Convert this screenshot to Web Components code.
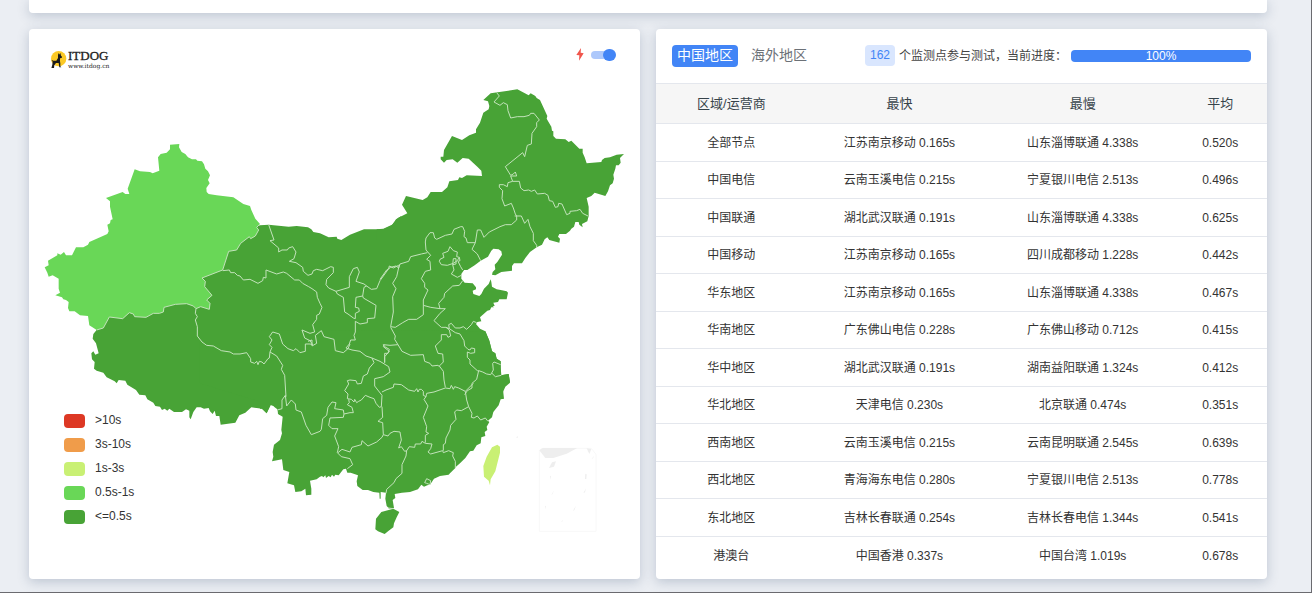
<!DOCTYPE html>
<html lang="zh-CN">
<head>
<meta charset="utf-8">
<title>ITDOG</title>
<style>
html, body { margin: 0; }
body { font-family: "Liberation Sans", "Noto Sans CJK SC", sans-serif; font-size: 12px; color: #444; background: #ebeef3; }
</style>
</head>
<body>
<speed-page>
  <ui-card slot="above"></ui-card>
  <ui-card><china-map></china-map></ui-card>
  <ui-card><result-panel></result-panel></ui-card>
</speed-page>

<template id="page-t">
<style>
:host { display: flex; flex-direction: column; gap: 16px; box-sizing: border-box; min-height: 100vh; padding: 0 44px 13px 29px; border-right: 1px solid #6b6b70; border-bottom: 1px solid #6b6b70; }
header { display: grid; height: 13px; }
main { display: grid; grid-template-columns: 1fr 1fr; gap: 16px; }
</style>
<header><slot name="above"></slot></header>
<main><slot></slot></main>
</template>

<template id="card-t">
<style>
:host { display: block; background: #fff; border-radius: 4px; box-shadow: 0 3px 12px rgba(50, 75, 110, .25); overflow: hidden; }
:host([slot="above"]) { border-radius: 0 0 4px 4px; }
</style>
<slot></slot>
</template>

<template id="logo-t">
<style>
:host { display: flex; align-items: center; gap: 1px; color: #222; }
.name { display: flex; flex-direction: column; font-family: "Liberation Serif", serif; }
b { font-size: 13px; line-height: 14px; font-weight: 400; -webkit-text-stroke: .3px #222; }
small { font-family: "DejaVu Serif", serif; font-size: 6px; line-height: 6px; }
</style>
<svg width="18" height="18" viewBox="0 0 54 54" aria-hidden="true"><circle cx="29" cy="26" r="23" fill="#fbc926"/><path fill="#1b1b1b" d="M27 8l3 6 4-5 2 8 3 3-1 4-5 1 0 9 1 6 0 9 3 3h-6l-2-13-8 0-5 7-1 7 3 2H7l3-11 1-9-4-6 6 3h9l5-8z"/></svg>
<span class="name"><b>ITDOG</b><small>www.itdog.cn</small></span>
</template>

<template id="switch-t">
<style>
:host { display: block; }
label { display: flex; align-items: center; gap: 7px; }
input { appearance: none; margin: 0; width: 25px; height: 12px; display: flex; align-items: center; position: relative; cursor: pointer; }
input::before { content: ""; width: 22px; height: 8px; border-radius: 4px; background: #adc8fb; }
input::after { content: ""; position: absolute; right: 0; top: 0; width: 13px; height: 12px; border-radius: 6px; background: #4285f6; }
input:not(:checked)::after { right: 12px; }
</style>
<label><svg width="8" height="14" viewBox="0 0 24 42" aria-hidden="true"><path fill="#f0564c" d="M15 0L1 21l9 1-1 16L23 16l-9-2z"/></svg><input type="checkbox" role="switch" aria-label="快速" checked></label>
</template>

<template id="legend-t">
<style>
:host { display: block; }
ul { margin: 0; padding: 0; list-style: none; display: grid; gap: 10px; color: #333; }
li { display: flex; align-items: flex-start; gap: 10px; height: 14px; line-height: 12px; }
i { width: 21px; height: 14px; border-radius: 4px; }
</style>
<ul>
<li><i style="background:#dd3824"></i>&gt;10s</li>
<li><i style="background:#f09c4a"></i>3s-10s</li>
<li><i style="background:#c9f074"></i>1s-3s</li>
<li><i style="background:#69d757"></i>0.5s-1s</li>
<li><i style="background:#48a336"></i>&lt;=0.5s</li>
</ul>
</template>

<template id="map-t">
<style>
:host { display: block; position: relative; }
.map { display: block; width: 100%; height: auto; }
brand-logo { position: absolute; left: 20px; top: 20px; }
mode-switch { position: absolute; right: 24px; top: 19px; }
map-legend { position: absolute; left: 35px; bottom: 55px; }
.land { fill: #48a336; }
.line { fill: none; stroke: #c3e3bb; stroke-width: 3; stroke-linejoin: round; }
</style>
<svg class="map" viewBox="29 29 611 550" role="img" aria-label="中国地图">
<g class="land">
<path transform="translate(80 300) scale(.333333)" d="M50 88L48 92 40 102 38 116 48 130 56 160 46 164 40 154 34 160 36 178 44 186 42 206 50 212 70 218 80 232 104 244 110 250 116 240 136 242 142 254 168 270 178 284 196 286 202 298 220 308 226 318 240 320 246 330 254 326 262 332 268 326 282 336 306 336 318 328 328 332 328 352 332 358 340 336 350 322 362 322 372 326 386 324 390 334 398 342 404 332 408 348 418 348 422 374 466 368 478 346 496 338 514 322 530 324 546 326 560 340 570 316 574 312 584 322 592 328 598 344 660 344V-20H388L220 20 88 40z"/>
<path transform="translate(180 210) scale(.333333)" d="M230 50L240 46 266 44 326 50 350 48 384 52 394 58 400 66 420 70 446 82 470 80 472 86 484 90 510 74 552 58 610 58 636 46 648 28 664 18V600H320L60 520V170L100 60 200 40z"/>
<path transform="translate(380 80) scale(.333333)" d="M-10 448L10 446 36 434 54 414 82 400 66 374 78 348 128 360 142 352 152 336 186 336 202 322 208 304 234 300 238 292 246 294 260 286 306 288 304 272 292 260 266 236 248 234 232 248 218 238 200 240 192 248 182 238 182 230 190 230 192 210 216 168 246 180 268 166 288 158 288 148 300 128 310 98 326 88 328 78 324 64 310 60 332 40 412 28 446 46 452 40 466 48 470 54 480 60 490 82 502 108 500 116 514 140 516 152 520 154 520 168 528 176 556 178 566 186 574 182 598 206 608 206 608 218 614 232 620 250 664 246 666 240 674 234 690 232 710 224 732 222 720 234 722 248 716 256 708 256 706 266 700 284 702 296 698 310 690 316 684 334 676 348 644 338 634 348 620 354 626 380 626 408 622 424 606 432 608 442 598 434 596 426 586 426 582 440 574 446 570 452 558 462 538 462 534 470 540 476 538 488 508 480 502 472 494 478 486 494 470 502 450 516 436 534 426 550 402 550 396 558 396 572 364 576 346 586 336 584 338 576 346 568 344 554 352 546 366 524 364 514 356 508 340 506 334 512 324 530 302 542 284 556 262 570 252 570 200 600H-10z"/>
<path transform="translate(380 220) scale(.333333)" d="M-60 60H230L262 150 252 150 244 162 244 176 254 188 278 190 288 202 288 208 278 212 280 222 298 228 304 222 312 206 326 192 332 178 334 186 336 200 350 208 362 210 380 214 384 218 380 238 358 238 354 246 340 248 344 258 338 258 342 262 334 262 330 270 322 272 300 292 304 304 292 306 288 312 300 326 316 334 328 362 336 394 346 400 350 416 362 424 362 442 364 466 386 462 390 488 376 500 370 514 370 536H-60z"/>
<path transform="translate(260 330) scale(.333333)" d="M0 0L676 4 688 32 696 64 706 70 710 86 722 94 722 136 746 132 750 156 738 162 728 182 732 206 722 208 716 226 700 246 696 262 684 272 688 276 680 290 682 300 674 306 676 318 664 322 662 340 650 346 640 362 630 364 616 384 600 400 588 410 586 414 570 430 566 434 540 438 522 446 510 464 502 466 492 470 484 464 474 478 450 486 426 488 404 492 406 504 398 510 402 534 388 536 380 528 376 506 378 488 362 486 362 506 359 506 358 488 340 486 324 480 308 480 292 468 290 454 294 436 272 428 262 428 258 416 250 418 236 436 226 434 222 440 216 434 212 442 206 438 198 444 196 436 190 442 186 438 180 440 170 448 150 452 154 476 154 494 138 496 136 476 124 484 106 486 102 466 82 460 88 426 70 420 66 388 36 394 40 380 38 366 42 344 60 330 66 310 64 300 68 260 54 252 52 232 34 222 20 250 6 236 0 236zM386 540L400 536 418 546 410 562 402 580 400 592 386 602 374 612 354 604 346 598 348 566 364 546z"/>
</g>
<path transform="translate(30 130) scale(.333333)" fill="#69d757" d="M420 44L448 42 447 52 455 66 466 72 474 82 486 88 498 88 502 92 516 94 522 103 526 116 534 124 540 136 534 150 539 160 529 174 530 186 536 192 560 196 610 202 640 222 660 228 664 240 676 266 690 282 680 292 686 300 676 318 662 326 658 320 632 340 620 360 596 364 578 420 516 444 526 454 524 470 546 496 530 510 540 520 538 538 512 530 498 536 490 528 470 521 436 523 402 532 400 546 388 550 370 550 348 562 314 560 310 552 298 548 278 566 238 561 220 594 200 600 178 586 174 558 150 556 134 544 118 544 114 534 116 516 108 510 100 508 96 502 76 496 90 488 86 476 86 446 68 436 56 440 52 428 44 412 56 406 54 392 82 376 82 370 92 374 102 366 108 376 126 376 138 352 160 352 174 344 178 336 232 312 236 304 232 284 240 280 242 270 248 268 240 230 240 214 228 204 278 186 286 192 298 192 293 176 314 118 330 124 360 126 368 130 388 122 384 82 392 72 410 68 420 58z"/>
<g class="line">
<path transform="translate(30 130) scale(.333333)" d="M690 282L680 292 686 300 676 318 662 326 658 320 632 340 620 360 596 364 578 420 516 444 526 454 524 470 546 496 530 510 540 520 538 538 512 530 498 536 490 528 470 521 436 523 402 532 400 546 388 550 370 550 348 562 314 560 310 552 298 548 278 566 238 561 220 594 200 600"/>
<path transform="translate(180 210) scale(.333333)" d="M266 44L282 90 270 92 296 114 296 126 306 120 322 120 326 114 338 110 348 126 342 146 328 154 348 158 368 172 370 184 384 196 396 192 400 182 410 178 428 182 452 170 460 172 460 188 440 208 438 224 446 234 468 244 508 232 508 200 520 176 532 172 538 186 528 214 552 222 560 228M468 244L472 252 490 262 494 306 504 312 520 324 526 326 526 310 538 304 536 294 526 292 528 262 548 258 552 232 560 228 574 238 590 236 600 212 626 176 628 168 640 174 656 166M548 258L550 264 588 286 584 324 562 326 562 338 540 342 526 334 526 366 522 376 526 390 512 390 508 402 498 414 516 420 540 424 558 438 576 444M128 182L148 180 152 188 164 188 172 196 180 198 190 210 210 208 234 220 248 212 250 202 258 204 258 180 290 192 310 186 320 190 344 210 358 210 368 220 386 230 396 236 410 246 412 262 420 280 426 292 418 312 410 316 410 328 398 344 404 366 390 370 366 360 374 384 390 392 398 404 390 402 376 402 376 424 360 428 348 416 340 422 324 416 308 402 298 372 278 366 268 380 276 390 268 404 276 412 270 426M384 394L396 390 396 408 410 400 406 376 424 362 432 380 462 388 466 422 490 428 504 416 510 402M48 296L46 310 52 320 46 330 52 350 52 378 66 396 80 406 100 408 124 422 150 426 160 432 180 432 200 428 212 446 212 456 224 460 230 454 234 464 238 454 246 456 252 462 264 446 268 444 270 426 290 438 308 466 304 478 314 496 318 560"/>
<path transform="translate(380 80) scale(.333333)" d="M350 38L358 48 342 66 360 76 370 68 382 74 384 92 392 114 412 110 432 110 448 106 452 100 462 100 478 120 470 128 470 140 456 160 454 192 442 196 434 230 428 218 376 260 392 286 400 282 406 276 410 288 392 288 398 304 384 308 382 320 370 314 358 314 358 322 368 332 366 356 374 378 394 370 400 384 406 402 410 408M398 304L418 304 422 324 432 332 446 330 454 334 464 330 472 342 494 340 504 346 508 362 518 364 526 382 534 380 536 370 546 372 560 404 570 400 570 394 590 392 600 388 608 400 624 408M404 408L424 408 434 430 444 418 450 440 460 460 460 482 470 496 470 504M410 408L410 420 394 434 376 434 360 440 328 456 312 472 302 450 292 450 286 488 276 508 292 522 302 542M286 488L262 488 258 474 252 470 254 454 248 440 242 440 222 448 216 462 196 466 170 478 164 474 160 458 150 458 138 474 136 486 138 510 152 526"/>
<path transform="translate(380 220) scale(.333333)" d="M152 106L140 118 150 124 152 150 136 154 124 176 134 190 134 202 144 210 130 240 130 256 152 262 180 266M142 98L124 102 92 110 86 124 60 132 56 144 48 138 32 142 20 150 0 178M58 134L50 170 38 190 48 206 38 230 40 276 32 320 46 322 68 308 86 298 110 298 130 284 130 256M32 322L46 348 44 358 54 374 30 376 10 374 14 380 28 388 24 400 14 400 14 428M54 374L66 394 92 406 130 404 134 424 150 430 156 438 174 436 178 440M248 182L238 196 218 198 194 220 192 232 176 250 180 266 196 266 180 280 162 302 184 322 198 322 208 326 206 314 214 310 226 324 240 324 250 320 260 328 274 314 280 304 290 308M180 118L192 112 188 100 204 94 210 80 220 92 232 96 230 110 238 112 232 122 220 130 202 136 184 134 178 124zM218 134L220 116 228 116 228 132 218 134 222 150 214 162 232 172 244 166M238 112L240 122 234 124 242 140 248 150M198 322L208 330 212 348 204 352 200 344 184 344 184 360 166 378 174 400 188 402 190 426 178 438 190 454 192 480 196 502M208 326L226 338 240 342 252 362 254 378 264 388 270 390 274 384 284 386 284 398 272 400 262 396 262 412 270 420 270 432 292 452 296 452 308 456 320 462 332 464 340 450 338 430 342 426 362 434M336 460L346 470 364 466M296 452L290 478 276 490 276 504 262 512 254 524"/>
<path transform="translate(260 330) scale(.333333)" d="M336 84L342 98 328 114 322 132 310 138 304 160 292 162 288 152 270 150 262 152 266 162 254 182 264 192 262 206 274 208 282 216 284 208 290 218 296 214 304 210 316 196 330 202 342 206 348 220 358 232 364 230 366 196 344 168 344 146 370 140 390 126 386 110 360 94 336 84M374 98L374 80 388 64 370 50 372 44M366 186L378 180 400 172 402 162 424 164 446 180 464 184 470 176 474 186 478 178 484 178 490 184 490 196 498 200 500 190 522 186 556 174 570 176 574 166 580 178 584 170 596 174 616 184 620 210 626 230 604 242 590 240 584 246 588 268 572 286 570 300 558 324 556 340 550 344 550 362M498 200L492 208 504 228 490 262 500 290 498 306 506 310 496 316 496 338M616 184L640 160M626 230L636 250 634 262 642 264 652 258 662 270 676 264 684 274M366 230L368 262 354 274 368 278 370 314M234 368L246 358 270 366 276 352 304 344 306 332 324 348 350 336 366 322 370 314 384 318 390 310 402 304 420 306 424 330 416 354 424 350 434 364 440 362 448 350 464 352 466 342 482 342 486 334 496 340 516 342 512 356 504 366 512 372 548 362 550 368 566 362 580 368 578 378 586 394 586 414M440 362L438 378 426 404 426 430 408 446 402 458 380 478 378 490M224 318L236 350 232 368 244 380 270 386 278 404 262 416M52 240L66 236 66 210 76 196 80 228 94 210 106 222 108 240 124 246 138 286 154 314 180 304 184 298 188 266 200 256 204 232 216 216 228 218 224 236 250 240 252 252 270 248 280 248 276 232 262 224 268 218 266 208M252 252L250 262 210 264 206 286 216 296 234 296 224 318M494 458L500 446 512 452 510 464 500 460zM384 534L400 536"/>
</g>
<path transform="translate(260 330) scale(.333333)" fill="#c9f074" d="M712 344L720 350 720 368 706 424 692 448 690 466 686 452 672 440 670 408 680 380 696 352z"/>
<g transform="translate(470 435) scale(.333333)" fill="#eee">
<path fill="none" stroke="#f8f8f8" stroke-width="3" d="M208 46L218 40H364L378 58V289H208z"/>
<path d="M208 46L218 39H322L290 56 250 69H226zM350 40L364 42 358 57zM246 82L258 79 252 95 237 99zM346 116L350 118 349 132H345zM348 160L340 175 345 172zM318 212L309 227 313 226zM372 62L365 72 369 70zM240 122L243 124 241 134zM253 165L244 179 247 178zM225 212L228 214 227 223zM272 260L279 256 278 259zM138 7L144 4 143 9z"/>
</g>
</svg>
<brand-logo></brand-logo>
<mode-switch></mode-switch>
<map-legend></map-legend>
</template>

<template id="results-t">
<style>
:host { display: block; padding-bottom: 5px; }
.bar { display: flex; align-items: flex-start; justify-content: space-between; box-sizing: border-box; height: 54px; padding: 16px 16px 0; }
.tabs { display: flex; gap: 8px; }
button { font: inherit; font-size: 14px; line-height: 20px; height: 22px; padding: 0 5px 2px; border: 0; border-radius: 4px; background: none; color: #6c7177; }
button[aria-selected="true"] { background: #4285f6; color: #fff; }
.status { display: flex; align-items: center; gap: 4px; line-height: 20px; }
.count { padding: 0 5px; border-radius: 4px; background: #d9e6fe; color: #4285f6; line-height: 21px; }
.progress { width: 180px; height: 12px; line-height: 12px; border-radius: 4px; background: #4285f6; color: #fff; text-align: center; }
table { width: 100%; table-layout: fixed; border-collapse: separate; border-spacing: 0; text-align: center; line-height: 18px; }
th, td { box-sizing: border-box; padding: 0 2px 0 0; border-bottom: 1px solid #e4e7ed; }
th { height: 41px; font-size: 13px; font-weight: 400; color: #36434a; background: #f6f6f6; border-top: 1px solid #e4e7ed; }
td { height: 38px; color: #333; }
tr:nth-child(even) td { height: 37px; }
tbody tr:last-child td { border-bottom: 0; }
.w15 { width: 15%; } .w25 { width: 25%; } .w30 { width: 30%; }
</style>
<div class="bar">
<div class="tabs" role="tablist"><button role="tab" aria-selected="true">中国地区</button><button role="tab" aria-selected="false">海外地区</button></div>
<div class="status"><span class="count">162</span><span>个监测点参与测试，当前进度：</span><div class="progress" role="progressbar" aria-valuenow="100" aria-label="进度">100%</div></div>
</div>
<table>
<thead><tr><th class="w25">区域/运营商</th><th class="w30">最快</th><th class="w30">最慢</th><th class="w15">平均</th></tr></thead>
<tbody></tbody>
</table>
</template>

<script>
const define = (name, id, setup) => customElements.define(name, class extends HTMLElement {
  constructor() {
    super();
    const root = this.attachShadow({ mode: "open" });
    root.append(document.getElementById(id).content.cloneNode(true));
    if (setup) setup(root);
  }
});

const rows = [
  ["全部节点", "江苏南京移动 0.165s", "山东淄博联通 4.338s", "0.520s"],
  ["中国电信", "云南玉溪电信 0.215s", "宁夏银川电信 2.513s", "0.496s"],
  ["中国联通", "湖北武汉联通 0.191s", "山东淄博联通 4.338s", "0.625s"],
  ["中国移动", "江苏南京移动 0.165s", "四川成都移动 1.228s", "0.442s"],
  ["华东地区", "江苏南京移动 0.165s", "山东淄博联通 4.338s", "0.467s"],
  ["华南地区", "广东佛山电信 0.228s", "广东佛山移动 0.712s", "0.415s"],
  ["华中地区", "湖北武汉联通 0.191s", "湖南益阳联通 1.324s", "0.412s"],
  ["华北地区", "天津电信 0.230s", "北京联通 0.474s", "0.351s"],
  ["西南地区", "云南玉溪电信 0.215s", "云南昆明联通 2.545s", "0.639s"],
  ["西北地区", "青海海东电信 0.280s", "宁夏银川电信 2.513s", "0.778s"],
  ["东北地区", "吉林长春联通 0.254s", "吉林长春电信 1.344s", "0.541s"],
  ["港澳台", "中国香港 0.337s", "中国台湾 1.019s", "0.678s"]
];

define("brand-logo", "logo-t");
define("mode-switch", "switch-t");
define("map-legend", "legend-t");
define("china-map", "map-t");
define("result-panel", "results-t", root => {
  const body = root.querySelector("tbody");
  for (const row of rows) {
    const tr = body.insertRow();
    for (const text of row) tr.insertCell().textContent = text;
  }
});
define("ui-card", "card-t");
define("speed-page", "page-t");
</script>
</body>
</html>
